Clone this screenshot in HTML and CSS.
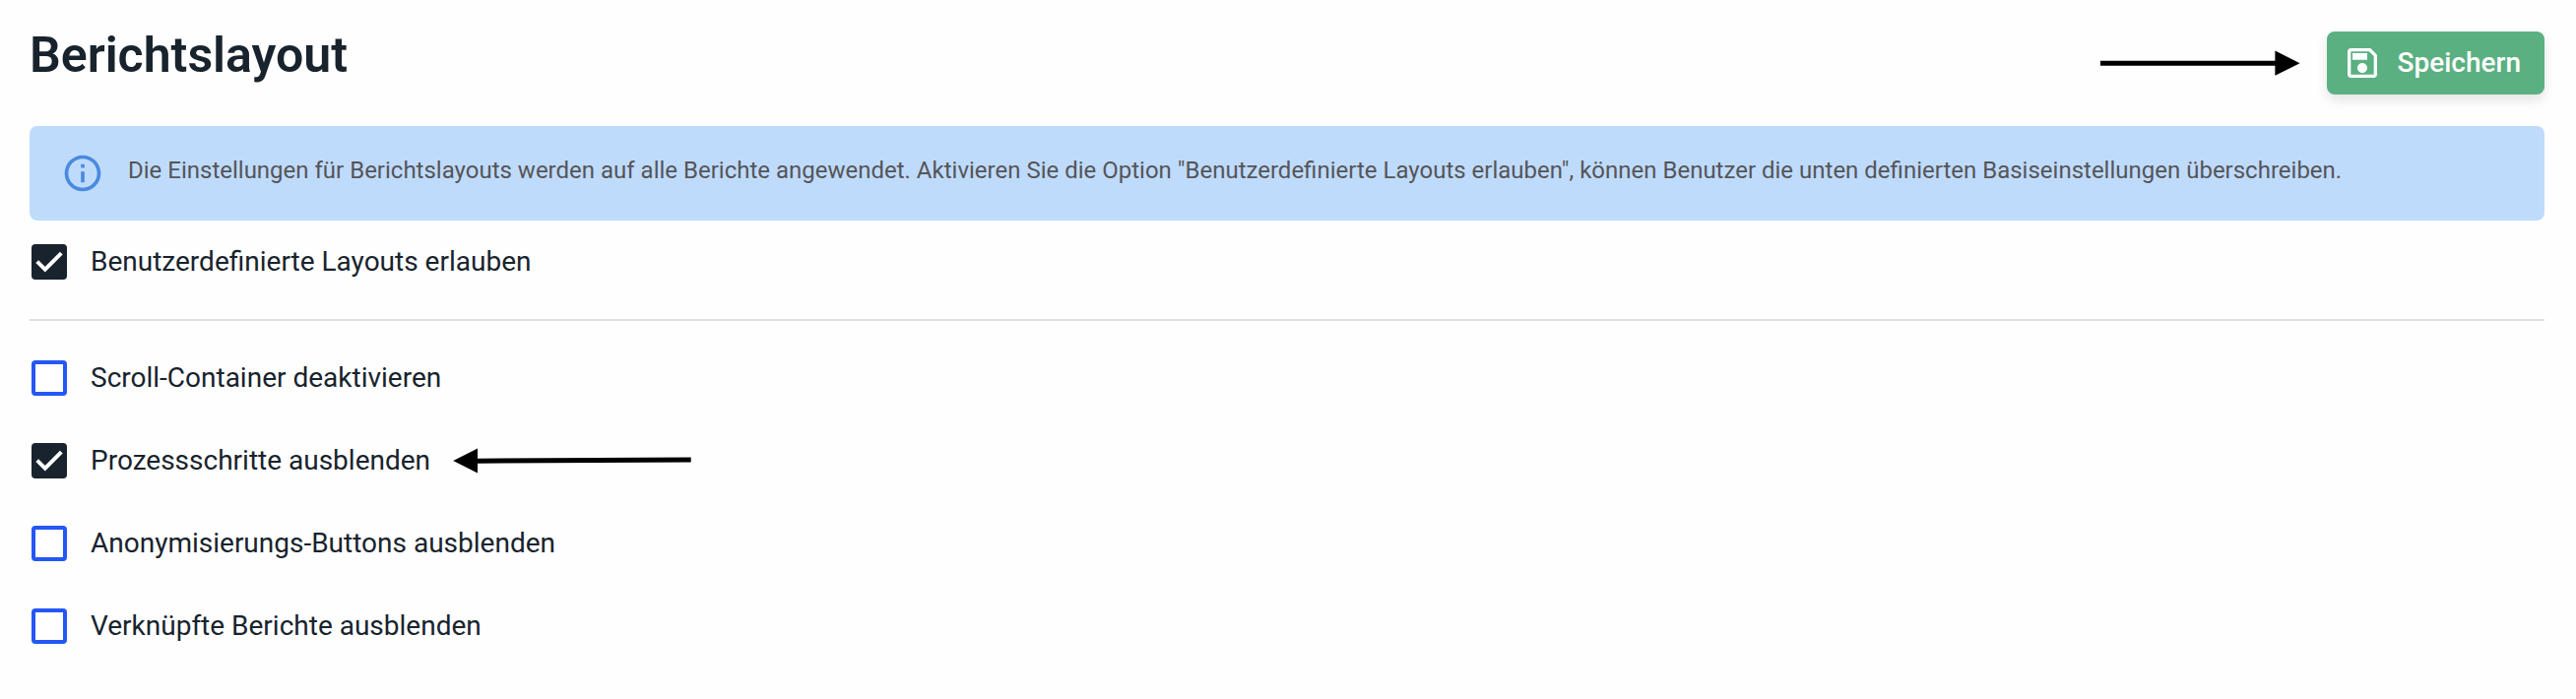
FILE: index.html
```html
<!DOCTYPE html>
<html lang="de">
<head>
<meta charset="utf-8">
<title>Berichtslayout</title>
<link rel="stylesheet" href="styles.css">
</head>
<body>
<main class="page">
  <header class="header">
    <h1 class="title">Berichtslayout</h1>
    <div class="actions">
      <svg class="arrow-right" width="204" height="28" viewBox="0 0 204 28"><path d="M0 11.8H178V16.8H0z"/><path d="M177.4 1.6L202.6 14.2L177.4 26.8z"/></svg>
      <button class="save">
        <svg class="save-icon" width="40" height="40" viewBox="0 0 24 24"><path d="M17 3H5c-1.11 0-2 .9-2 2v14c0 1.1.89 2 2 2h14c1.1 0 2-.9 2-2V7l-4-4zm2 16H5V5h11.17L19 7.83V19zm-7-7c-1.66 0-3 1.34-3 3s1.34 3 3 3 3-1.34 3-3-1.34-3-3-3zM6 6h9v4H6z"/></svg>
        <span>Speichern</span>
      </button>
    </div>
  </header>
  <section class="alert">
    <svg class="info-icon" width="44" height="44" viewBox="0 0 24 24"><path d="M11 7h2v2h-2zm0 4h2v6h-2zm1-9C6.48 2 2 6.48 2 12s4.48 10 10 10 10-4.48 10-10S17.52 2 12 2zm0 18c-4.41 0-8-3.59-8-8s3.59-8 8-8 8 3.59 8 8-3.59 8-8 8z"/></svg>
    <p class="alert-text">Die Einstellungen für Berichtslayouts werden auf alle Berichte angewendet. Aktivieren Sie die Option "Benutzerdefinierte Layouts erlauben", können Benutzer die unten definierten Basiseinstellungen überschreiben.</p>
  </section>
  <div class="option option-first">
    <span class="box checked"><svg width="36" height="36" viewBox="0 0 24 24"><path d="M3.8 11.7L9.2 17.1L20.2 6.1"/></svg></span>
    <span class="label">Benutzerdefinierte Layouts erlauben</span>
  </div>
  <hr class="divider">
  <div class="options">
    <div class="option"><span class="box"></span><span class="label">Scroll-Container deaktivieren</span></div>
    <div class="option">
      <span class="box checked"><svg width="36" height="36" viewBox="0 0 24 24"><path d="M3.8 11.7L9.2 17.1L20.2 6.1"/></svg></span>
      <span class="label label-steps">Prozessschritte ausblenden</span>
      <svg class="arrow-left" width="242" height="28" viewBox="0 0 242 28"><path d="M24 11.7L241.7 10.4V15.4L24 16.7z"/><path d="M0.2 14.1L25 1.5V26.5z"/></svg>
    </div>
    <div class="option"><span class="box"></span><span class="label">Anonymisierungs-Buttons ausblenden</span></div>
    <div class="option"><span class="box"></span><span class="label">Verknüpfte Berichte ausblenden</span></div>
  </div>
</main>
</body>
</html>
```

FILE: styles.css
```css
* { box-sizing: border-box; }
body {
  margin: 0;
  background: #fefefe;
  color: #18232d;
  font-family: Roboto, "Liberation Sans", sans-serif;
}
svg { display: block; flex: none; }
.page { padding: 24px 32px 0 30px; }
.header {
  display: flex;
  justify-content: space-between;
  height: 104px;
}
.title {
  margin: 0;
  font-size: 50px;
  line-height: 64px;
  font-weight: 600;
}
.actions {
  display: flex;
  align-items: center;
  gap: 26px;
  height: 64px;
  margin-top: 8px;
}
.save {
  display: flex;
  align-items: center;
  gap: 15.5px;
  width: 221px;
  height: 64px;
  padding: 0 0 0 16px;
  border: 0;
  border-radius: 8px;
  background: #5bb082;
  color: #fff;
  font: 500 28px/64px Roboto, "Liberation Sans", sans-serif;
  box-shadow: 0 6px 12px rgba(0, 0, 0, 0.1);
}
.save-icon { fill: #fff; }
.alert {
  display: flex;
  height: 96px;
  padding: 26px 32px;
  border-radius: 8px;
  background: #bfdbfc;
}
.info-icon { fill: #4a8ae0; }
.alert-text {
  margin: 0 0 0 24px;
  color: #555559;
  font-size: 24px;
  line-height: 38px;
  white-space: nowrap;
}
.option {
  display: flex;
  align-items: center;
  height: 36px;
  padding-left: 2px;
}
.option-first { margin-top: 24px; }
.box {
  flex: none;
  width: 36px;
  height: 36px;
  border: 4px solid #2457f5;
  border-radius: 4px;
  background: #fff;
}
.checked {
  border: 0;
  background: #18232d;
}
.checked path {
  fill: none;
  stroke: #fff;
  stroke-width: 2.6;
}
.label {
  margin-left: 24px;
  font-size: 28px;
  line-height: 36px;
  white-space: nowrap;
}
.label-steps { width: 368px; }
.divider {
  height: 2px;
  margin: 40px 0;
  border: 0;
  background: #dfdfdf;
}
.options {
  display: flex;
  flex-direction: column;
  gap: 48px;
}
```
